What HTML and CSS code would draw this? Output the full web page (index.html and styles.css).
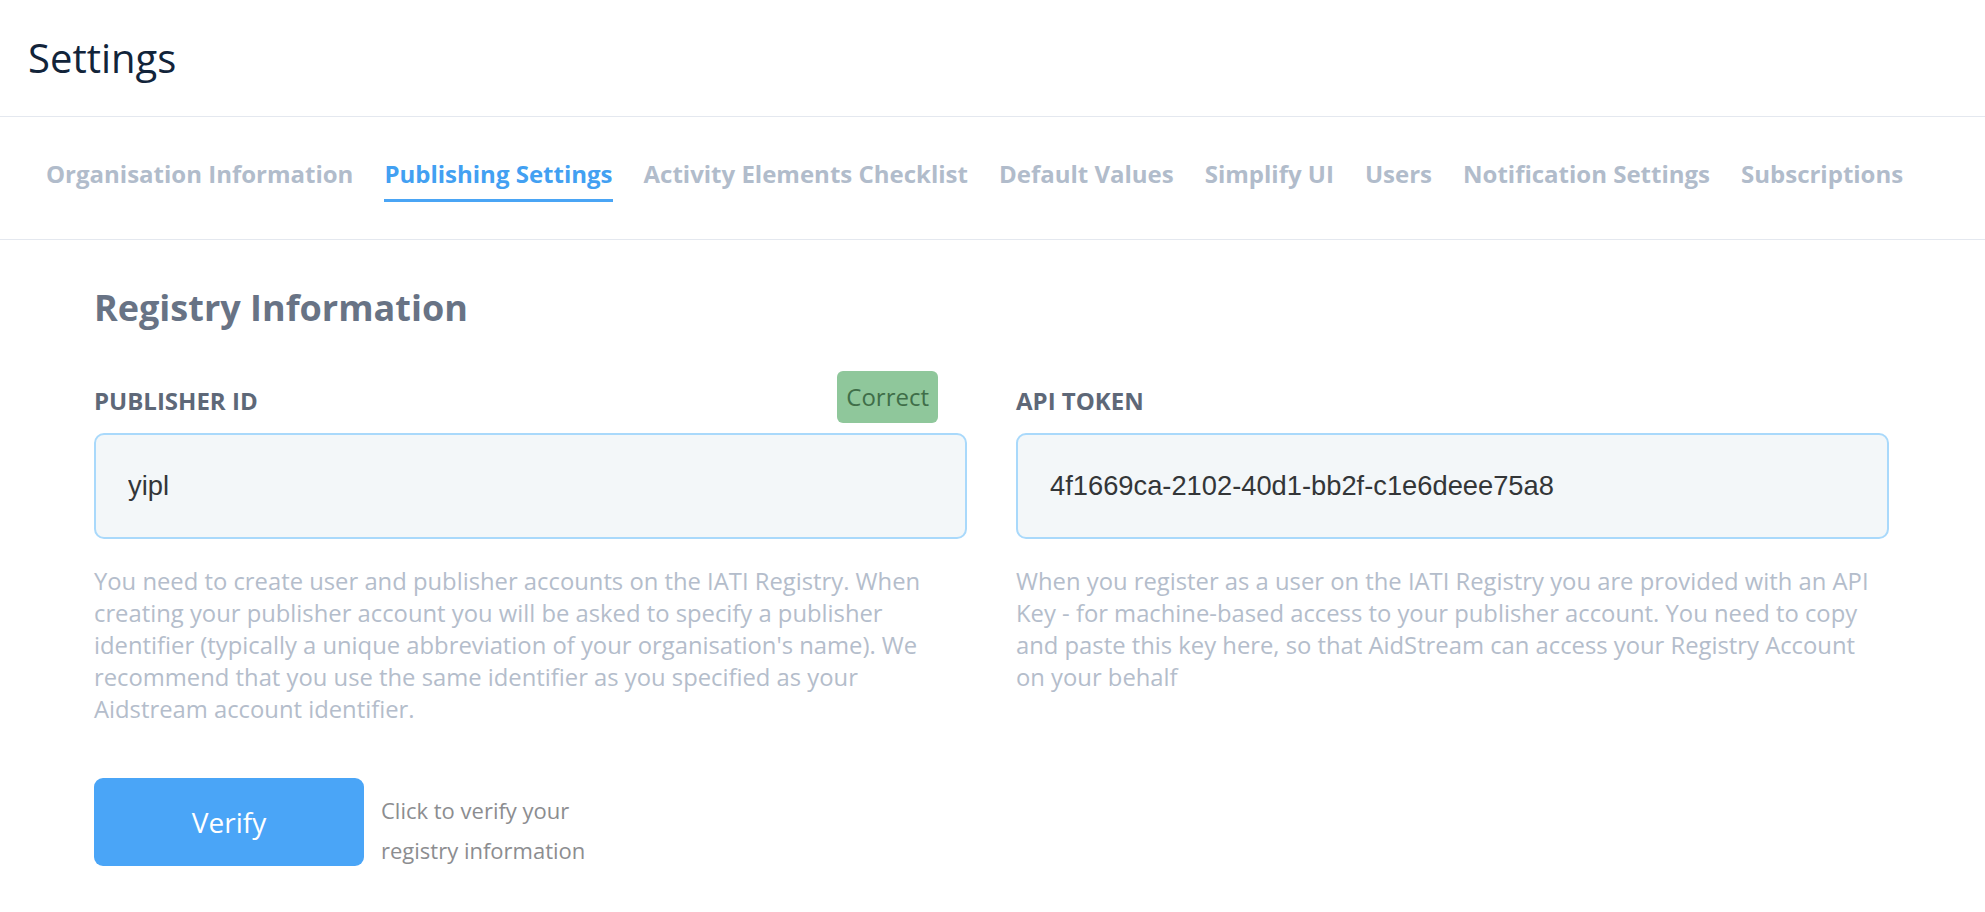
FILE: index.html
```html
<!DOCTYPE html>
<html lang="en">
<head>
    <meta charset="UTF-8">
    <meta name="viewport" content="width=device-width, initial-scale=1.0">
    <title>Settings</title>
    <link rel="stylesheet" href="styles.css">
</head>
<body>
    <header class="page-header">
        <h1>Settings</h1>
    </header>

    <nav class="tabs">
        <a class="tab" href="#">Organisation Information</a>
        <a class="tab active" href="#">Publishing Settings</a>
        <a class="tab" href="#">Activity Elements Checklist</a>
        <a class="tab" href="#">Default Values</a>
        <a class="tab" href="#">Simplify UI</a>
        <a class="tab" href="#">Users</a>
        <a class="tab" href="#">Notification Settings</a>
        <a class="tab" href="#">Subscriptions</a>
    </nav>

    <main class="content">
        <h2>Registry Information</h2>

        <div class="fields">
            <div class="field">
                <div class="field-head">
                    <label for="publisherId">PUBLISHER ID</label>
                    <span class="badge">Correct</span>
                </div>
                <input class="text-input" id="publisherId" type="text" value="yipl">
                <p class="help">You need to create user and publisher accounts on the IATI Registry. When creating your publisher account you will be asked to specify a publisher identifier (typically a unique abbreviation of your organisation's name). We recommend that you use the same identifier as you specified as your Aidstream account identifier.</p>
            </div>

            <div class="field">
                <div class="field-head">
                    <label for="apiToken">API TOKEN</label>
                </div>
                <input class="text-input" id="apiToken" type="text" value="4f1669ca-2102-40d1-bb2f-c1e6deee75a8">
                <p class="help">When you register as a user on the IATI Registry you are provided with an API Key - for machine-based access to your publisher account. You need to copy and paste this key here, so that AidStream can access your Registry Account on your behalf</p>
            </div>
        </div>

        <div class="verify-row">
            <button class="verify-btn">Verify</button>
            <p class="verify-note">Click to verify your<br>registry information</p>
        </div>
    </main>
</body>
</html>
```

FILE: styles.css
```css
body {
    font-family: "Open Sans", Arial, sans-serif;
    margin: 0;
    padding: 0;
    background-color: #ffffff;
}
.page-header {
    padding: 34px 28px 35px;
    border-bottom: 1px solid #e4e8ef;
}
.page-header h1 {
    margin: 0;
    font-size: 40px;
    line-height: 47px;
    font-weight: 400;
    color: #12243a;
}
.tabs {
    display: flex;
    gap: 31px;
    padding: 41px 46px 37px;
    border-bottom: 1px solid #e4e8ef;
}
.tab {
    font-size: 24px;
    line-height: 31px;
    font-weight: 700;
    color: #b1bccb;
    text-decoration: none;
    padding-bottom: 10px;
    border-bottom: 3px solid transparent;
}
.tab.active {
    color: #42a0f2;
    border-bottom-color: #4aa5f5;
}
.content {
    padding: 46px 96px 40px 94px;
}
.content h2 {
    margin: 0;
    font-size: 36px;
    line-height: 44px;
    font-weight: 700;
    color: #687385;
}
.fields {
    display: grid;
    grid-template-columns: 1fr 1fr;
    gap: 49px;
    margin-top: 41px;
}
.field-head {
    display: flex;
    justify-content: space-between;
    align-items: center;
    height: 52px;
}
.field-head label {
    font-size: 24px;
    font-weight: 700;
    color: #5e6878;
    padding-top: 6px;
}
.badge {
    background: #8fc79b;
    color: #3f6e49;
    font-size: 24px;
    line-height: 52px;
    padding: 0 9px;
    border-radius: 6px;
    margin-right: 29px;
}
.text-input {
    display: block;
    box-sizing: border-box;
    width: 100%;
    height: 106px;
    margin-top: 10px;
    padding: 0 32px;
    border: 2px solid #a9d9fb;
    border-radius: 10px;
    background: #f3f7f9;
    font-family: "Liberation Sans", Arial, sans-serif;
    font-size: 27.3px;
    color: #333638;
    outline: none;
}
.help {
    margin: 26px 0 0;
    font-size: 23.8px;
    line-height: 32px;
    color: #b4bdcb;
}
.verify-row {
    display: flex;
    align-items: flex-start;
    gap: 17px;
    margin-top: 53px;
}
.verify-btn {
    width: 270px;
    height: 88px;
    background-color: #4aa5f7;
    color: white;
    border: none;
    border-radius: 9px;
    font-family: "Open Sans", Arial, sans-serif;
    font-size: 28px;
    font-weight: 500;
    cursor: pointer;
}
.verify-note {
    margin: 12px 0 0;
    font-size: 22px;
    line-height: 40px;
    color: #8c8d90;
}
```
